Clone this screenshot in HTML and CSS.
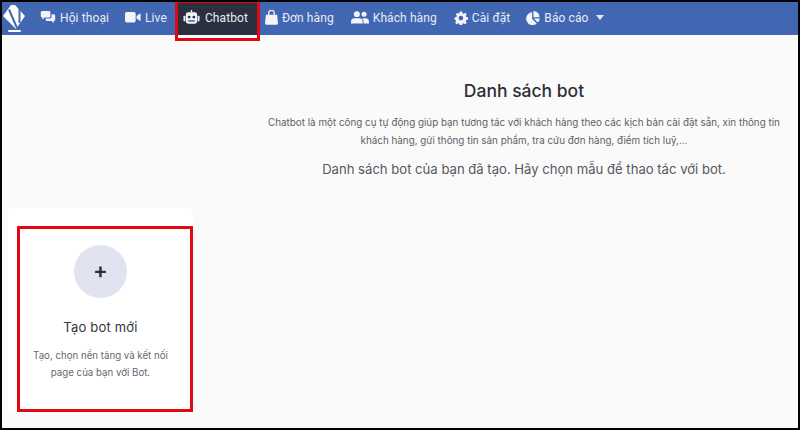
FILE: index.html
```html
<!DOCTYPE html>
<html lang="vi">
<head>
<meta charset="utf-8">
<title>Danh sách bot</title>
<link rel="stylesheet" href="styles.css">
</head>
<body>
<div class="frame">
  <nav class="nav">
    <svg class="logo" viewBox="0 0 24 30"><path d="M1 12 9 1 13 1 23 12 14 25z" fill="#fff"/><path d="M7 5.500 15 24M17.500 2.500V19" fill="none" stroke="#4267b2" stroke-width="2"/><rect x="6" y="26" width="13" height="2" rx="1" fill="#fff"/></svg>
    <a class="item i1"><svg class="w16" viewBox="0 0 20 16"><path d="M1 1.500Q1 0 3 0h8q2 0 2 1.500v5Q13 8 11 8H6L3 10.500V8Q1 8 1 6.500z" fill="#f2f4fa"/><path d="M14.500 4H17q2 0 2 2v5q0 1.500-2 1.500V15l-3-2.500H9q-2 0-2-1.500v-1.500h5q2.500 0 2.500-2.500z" fill="#f2f4fa"/></svg>Hội thoại</a>
    <a class="item i2"><svg class="w16" viewBox="0 0 18 14"><rect x="0" y="1" width="12" height="12" rx="2" fill="#f2f4fa"/><path d="M13 5.500 17.500 2.500v9L13 8.500z" fill="#f2f4fa"/></svg>Live</a>
    <a class="item active"><svg class="w17" viewBox="0 0 18 15"><path d="M9 0v2.500" stroke="#f2f4fa" stroke-width="1.500"/><rect x="3" y="2.500" width="12" height="12" rx="2.500" fill="#f2f4fa"/><rect x="0.500" y="6" width="2" height="6" rx="1" fill="#f2f4fa"/><rect x="15.500" y="6" width="2" height="6" rx="1" fill="#f2f4fa"/><circle cx="6.500" cy="7.500" r="1.500" fill="#2b3040"/><circle cx="11.500" cy="7.500" r="1.500" fill="#2b3040"/><rect x="5.500" y="11" width="7" height="1.200" fill="#2b3040"/></svg>Chatbot</a>
    <a class="item i4"><svg class="w13" viewBox="0 0 14 16"><path d="M1 5h12l1 9q0 2-2 2H2q-2 0-2-2z" fill="#f2f4fa"/><path d="M4 6V3.500a3 3 0 0 1 6 0V6" fill="none" stroke="#f2f4fa" stroke-width="1.400"/></svg>Đơn hàng</a>
    <a class="item i5"><svg class="w18" viewBox="0 0 20 14"><circle cx="6.500" cy="3.500" r="3.300" fill="#f2f4fa"/><path d="M0 14v-2q0-4 4-4h5q4 0 4 4v2z" fill="#f2f4fa"/><circle cx="14.500" cy="3.500" r="2.800" fill="#f2f4fa"/><path d="M14 8h2q4 0 4 4v2h-6v-2q0-2-1.500-3.500z" fill="#f2f4fa"/></svg>Khách hàng</a>
    <a class="item i6"><svg class="w14" viewBox="0 0 16 16"><path fill-rule="evenodd" d="M6.500 0h3l.5 2.300 1.400.6 2-1.300 2 2.100-1.300 2 .6 1.300 2.300.5v3l-2.300.5-.6 1.400 1.300 2-2 2-2-1.300-1.400.6-.5 2.300h-3L6 15.700l-1.400-.6-2 1.300-2-2 1.300-2-.6-1.400L0 10.500v-3l2.300-.5.6-1.300-1.300-2 2-2.100 2 1.300L6 2.300zM8 5.500a3 3 0 1 0 0 6 3 3 0 0 0 0-6z" fill="#f2f4fa" transform="scale(.9) translate(.8 .5)"/></svg>Cài đặt</a>
    <a class="item i7"><svg class="w14" viewBox="0 0 16 16"><path d="M7 1.500V9l5.300 5.300A7.300 7.300 0 1 1 7 1.500z" fill="#f2f4fa"/><path d="M8.500 0A7 7 0 0 1 15.500 7H8.500z" fill="#f2f4fa"/><path d="M9 8.500h6.800a7 7 0 0 1-2.300 4.500z" fill="#f2f4fa"/></svg>Báo cáo<span class="caret"></span></a>
  </nav>
  <main class="main">
    <section class="intro">
      <h1 class="title">Danh sách bot</h1>
      <p class="desc">Chatbot là một công cụ tự động giúp bạn tương tác với khách hàng theo các kịch bản cài đặt sẵn, xin thông tin<br>khách hàng, gửi thông tin sản phẩm, tra cứu đơn hàng, điểm tích luỹ,...</p>
      <p class="lead">Danh sách bot của bạn đã tạo. Hãy chọn mẫu để thao tác với bot.</p>
    </section>
    <section class="card">
      <div class="circle">+</div>
      <h2 class="card-title">Tạo bot mới</h2>
      <p class="card-text">Tạo, chọn nền tảng và kết nối<br>page của bạn với Bot.</p>
    </section>
  </main>
  <div class="mark mark-nav"></div>
  <div class="mark mark-card"></div>
</div>
</body>
</html>
```
FILE: styles.css
```css
* { box-sizing: border-box; }
html, body { margin: 0; padding: 0; background: #000; }
body { width: 800px; height: 430px; overflow: hidden; font-family: Inter, "Noto Sans", sans-serif; }
.frame { position: relative; margin: 2px 2px 0 2px; width: 796px; height: 426px; background: #fafafa; overflow: hidden; }
.nav { display: flex; align-items: center; height: 33px; background: #4267b2; color: #e8ecf6; font-family: Roboto, sans-serif; font-size: 12px; letter-spacing: 0.1px; }
.logo { width: 24px; height: 30px; flex: none; }
.item { display: flex; align-items: center; gap: 4px; height: 100%; padding-bottom: 2px; white-space: nowrap; }
.item svg { flex: none; height: auto; }
.w13 { width: 13px; }
.w14 { width: 14px; }
.w16 { width: 16px; }
.w17 { width: 17px; }
.w18 { width: 18px; }
.i1 { margin-left: 14px; }
.i2 { margin-left: 16px; }
.active { margin-left: 11px; width: 82px; padding-left: 5px; gap: 5px; background: #2b3040; }
.i4 { margin-left: 5px; }
.i5 { margin-left: 17px; }
.i6 { margin-left: 17px; }
.i7 { margin-left: 16px; }
.caret { margin-left: 3px; border: 4px solid transparent; border-top: 5px solid #e8ecf6; border-bottom: 0; }
.intro { display: flex; flex-direction: column; align-items: center; width: 590px; margin-left: 227px; padding-top: 45px; text-align: center; }
.title { margin: 0; font-size: 17.500px; font-weight: 500; line-height: 22px; color: #2d2f36; }
.desc { margin: 11px 0 0; font-size: 9.850px; line-height: 18px; color: #5d5f66; }
.lead { margin: 10px 0 0; font-size: 13.100px; line-height: 20px; color: #55575e; }
.card { display: flex; flex-direction: column; align-items: center; width: 185px; height: 205px; margin: 29px 0 0 6px; padding-top: 37px; background: #fff; border-radius: 4px; text-align: center; }
.circle { width: 53px; height: 53px; border-radius: 50%; background: #e1e4f0; color: #2d2f36; font-size: 22px; font-weight: 600; line-height: 51px; }
.card-title { margin: 19px 0 0; font-size: 13px; font-weight: 400; letter-spacing: 0.2px; line-height: 20px; color: #33353c; }
.card-text { margin: 10px 0 0; font-size: 9.700px; line-height: 17px; color: #66686f; }
.mark { position: absolute; border: 3px solid #e30613; }
.mark-nav { left: 173px; top: -2px; width: 85px; height: 41px; }
.mark-card { left: 15px; top: 224px; width: 176px; height: 186px; }
```
